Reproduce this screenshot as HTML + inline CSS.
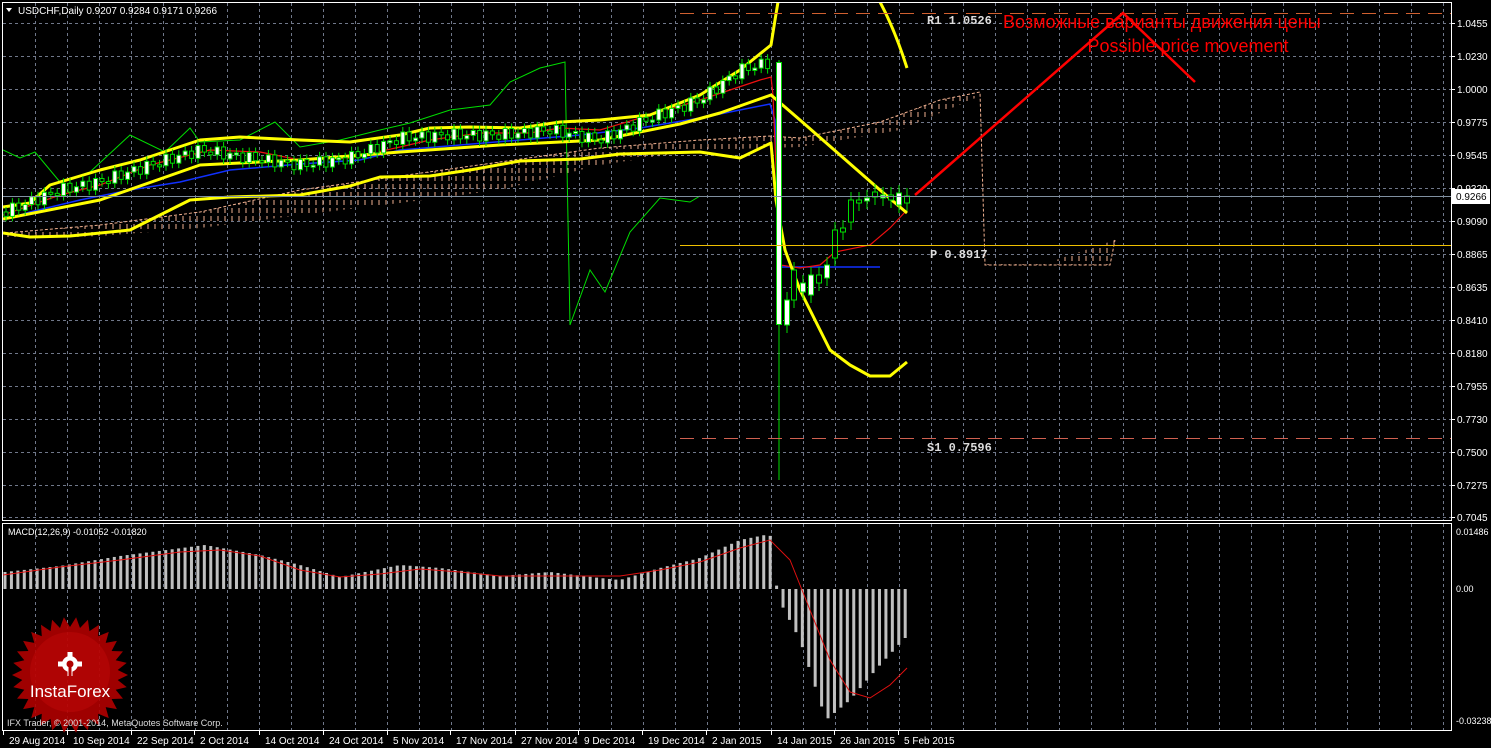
<!DOCTYPE html>
<html><head><meta charset="utf-8"><style>
html,body{margin:0;padding:0;background:#000;width:1491px;height:748px;overflow:hidden}
svg{display:block}
text{font-family:"Liberation Sans",sans-serif}
</style></head><body>
<svg id="s" width="1491" height="748" viewBox="0 0 1491 748" xmlns="http://www.w3.org/2000/svg">
<defs>
<pattern id="hatch" width="7" height="8" patternUnits="userSpaceOnUse">
<line x1="1" y1="0" x2="1" y2="5" stroke="#f0b090" stroke-width="1"/>
</pattern>
<clipPath id="mc"><rect x="3" y="3" width="1448" height="516"/></clipPath>
</defs>
<rect width="1491" height="748" fill="#000"/>
<g id="grid" stroke="#70788a" stroke-dasharray="3,3" stroke-width="1"></g>
<g stroke="#fff" stroke-width="1" fill="none">
<rect x="2.5" y="2.5" width="1449" height="518"/>
<rect x="2.5" y="523.5" width="1449" height="207"/>
</g>
<g clip-path="url(#mc)">
<path d="M5,233 L100,225 L200,212 L300,190 L400,176 L500,162 L600,148 L700,140 L770,136 L800,138 L880,122 L940,100 L980,92 L985,265 L1110,265 L1115,240 L1050,262 L985,262 L980,96 L900,130 L800,147 L700,150 L600,165 L500,190 L400,203 L300,215 L200,228 L100,236 L5,240 Z" fill="url(#hatch)"/>
<path d="M5,233 L100,225 L200,212 L300,190 L400,176 L500,162 L600,148 L700,140 L770,136 L800,138 L880,122 L940,100 L980,92 L985,265 L1110,265 L1115,240" fill="none" stroke="#f0b090" stroke-dasharray="3,2"/>
<polyline fill="none" stroke="#00dd00" points="3,150 20,158 35,152 60,182 90,172 130,135 165,152 190,128 200,142 240,140 275,122 300,147 340,140 380,130 410,123 450,110 490,105 510,82 540,68 565,62 570,325 590,270 605,292 630,232 660,198 690,202 700,196"/>
<polyline fill="none" stroke="#1030ff" stroke-width="1.5" points="3,220 30,212 80,200 130,190 180,182 230,170 300,164 360,160 400,150 460,145 520,140 580,135 640,128 700,118 770,104 775,120 780,267 880,267"/>
<polyline fill="none" stroke="#ee1010" stroke-width="1.2" points="3,215 60,195 100,185 150,165 210,150 260,152 300,160 350,158 400,147 430,140 480,133 530,133 560,128 600,130 660,112 700,100 760,80 771,77 773,95 780,265 800,268 820,265 835,252 870,245 890,228 907,210"/>
<g fill="none" stroke="#ffff00" stroke-width="3" stroke-linejoin="round">
<polyline points="3,207 30,203 50,185 100,170 140,160 200,140 240,137 300,140 350,142 400,135 430,128 470,127 520,128 560,122 600,120 650,115 700,95 740,70 771,45 775,20 778,2"/>
<polyline points="3,219 100,200 200,165 300,160 400,152 500,145 600,140 680,124 720,113 771,95 800,120 880,190 907,213"/>
<polyline points="3,233 30,237 70,236 130,230 190,200 230,197 300,195 350,186 380,177 430,176 470,170 520,161 580,159 620,154 700,152 740,158 771,143 776,200 785,250 800,290 820,330 830,350 850,365 870,376 890,376 907,362"/>
<path d="M880,2 Q895,30 907,68"/>
</g>
<g id="candles"></g>
<line x1="779" y1="60" x2="779" y2="480" stroke="#00dd00"/>
<rect x="776.5" y="62.5" width="5" height="262" fill="#fff" stroke="#00dd00"/>
</g>
<line x1="3" y1="196.5" x2="1451" y2="196.5" stroke="#8090a0"/>
<line x1="680" y1="245.5" x2="1451" y2="245.5" stroke="#f0c000"/>
<line x1="680" y1="438.5" x2="1451" y2="438.5" stroke="#d06050" stroke-dasharray="14,8"/>
<line x1="680" y1="13.5" x2="1451" y2="13.5" stroke="#d06030" stroke-dasharray="14,8"/>
<polyline fill="none" stroke="#ff0000" stroke-width="2.5" points="915,195 1123,13 1195,82"/>
<g font-size="12" fill="#ddd" font-weight="bold">
<text x="927" y="24" style="font-family:'Liberation Mono',monospace">R1 1.0526</text>
<text x="930" y="258" style="font-family:'Liberation Mono',monospace">P 0.8917</text>
<text x="927" y="451" style="font-family:'Liberation Mono',monospace">S1 0.7596</text>
</g>
<text x="1003" y="28" font-size="18" fill="#ff0000" style="font-family:'Liberation Sans','DejaVu Sans',sans-serif">Возможные варианты движения цены</text>
<text x="1188" y="52" font-size="18" fill="#ff0000" text-anchor="middle">Possible price movement</text>
<path d="M6,8 L12,8 L9,12 Z" fill="#fff"/>
<text x="18" y="14" font-size="10" fill="#fff">USDCHF,Daily  0.9207 0.9284 0.9171 0.9266</text>
<text x="8" y="535" font-size="9" fill="#fff">MACD(12,26,9) -0.01052 -0.01820</text>
<g id="macd"></g>
<polyline fill="none" stroke="#e01010" points="3,575 60,567 120,560 180,552 220,550 260,556 300,570 340,577 380,574 420,569 460,572 500,576 560,576 620,576 660,570 700,562 740,548 770,540 790,560 810,610 830,660 850,692 870,698 890,685 907,668"/>
<g id="ylab" font-size="10" fill="#fff"></g>
<rect x="1452" y="189" width="38" height="15" fill="#fff"/>
<text x="1456" y="200" font-size="10" fill="#000">0.9266</text>
<text x="1456" y="535" font-size="9" fill="#fff">0.01486</text>
<text x="1456" y="592" font-size="9" fill="#fff">0.00</text>
<text x="1456" y="724" font-size="9" fill="#fff">-0.03238</text>
<g id="xlab" font-size="10" fill="#fff"></g>
<g id="logo"></g>
<text x="70" y="697" font-size="17" fill="#fff" text-anchor="middle">InstaForex</text>
<g fill="#fff">
<circle cx="70" cy="664" r="8"/>
<rect x="67.5" y="652" width="5" height="24"/>
<rect x="58" y="661.5" width="24" height="5"/>
</g>
<circle cx="70" cy="664" r="3.5" fill="#b00000"/>
<rect x="68.5" y="664" width="3" height="12" fill="#b00000"/>
<text x="7" y="726" font-size="9" fill="#ddd">IFX Trader, © 2001-2014, MetaQuotes Software Corp.</text>
</svg>
<script>
(function(){
var NS="http://www.w3.org/2000/svg";
function el(p,t,a){var e=document.createElementNS(NS,t);for(var k in a)e.setAttribute(k,a[k]);p.appendChild(e);return e;}
var g=document.getElementById('grid');
for(var x=35;x<1451;x+=32){el(g,'line',{x1:x+.5,y1:3,x2:x+.5,y2:520});el(g,'line',{x1:x+.5,y1:524,x2:x+.5,y2:730});}
var yl=document.getElementById('ylab');
var labs=["1.0455","1.0230","1.0000","0.9775","0.9545","0.9320","0.9090","0.8865","0.8635","0.8410","0.8180","0.7955","0.7730","0.7500","0.7275","0.7045"];
for(var i=0;i<16;i++){var yy=23+i*33-(i==15?1:0);el(g,'line',{x1:3,y1:yy+.5,x2:1451,y2:yy+.5});
 el(yl,'line',{x1:1451,y1:yy+.5,x2:1455,y2:yy+.5,stroke:'#fff'});
 var t=el(yl,'text',{x:1457,y:yy+4});t.textContent=labs[i];}
var xl=document.getElementById('xlab');
var d=[[3,"29 Aug 2014"],[67,"10 Sep 2014"],[131,"22 Sep 2014"],[194,"2 Oct 2014"],[259,"14 Oct 2014"],[323,"24 Oct 2014"],[387,"5 Nov 2014"],[450,"17 Nov 2014"],[515,"27 Nov 2014"],[578,"9 Dec 2014"],[642,"19 Dec 2014"],[706,"2 Jan 2015"],[771,"14 Jan 2015"],[834,"26 Jan 2015"],[898,"5 Feb 2015"]];
d.forEach(function(a){el(xl,'line',{x1:a[0]+.5,y1:731,x2:a[0]+.5,y2:735,stroke:'#fff'});var t=el(xl,'text',{x:a[0]+6,y:744});t.textContent=a[1];});
var pp=[[5,212],[60,190],[100,182],[150,165],[200,150],[250,158],[300,165],[350,158],[400,138],[450,135],[500,135],[550,130],[600,140],[650,118],[700,100],[740,70],[771,62]];
function interp(p,x){for(var i=1;i<p.length;i++)if(x<=p[i][0]){var a=p[i-1],b=p[i];return a[1]+(b[1]-a[1])*(x-a[0])/(b[0]-a[0]);}return p[p.length-1][1];}
var cg=document.getElementById('candles');
var prev=212;
for(var x=6;x<772;x+=6.4){var c=interp(pp,x)+Math.sin(x*0.37)*6;var o=prev;var tp=Math.min(o,c),h=Math.max(2,Math.abs(o-c));
 el(cg,'line',{x1:x,y1:tp-5,x2:x,y2:tp+h+5,stroke:'#00dd00'});
 el(cg,'rect',{x:x-2,y:tp,width:4,height:h,fill:c<o?'#fff':'#000',stroke:'#00dd00'});prev=c;}
var late=[[787,300,325,1],[794,270,300,0],[803,283,292,1],[811,275,295,1],[819,283,275,0],[827,265,278,1],[835,258,230,0],[843,232,228,0],[851,222,200,0],[859,203,200,0],[867,200,198,1],[875,197,192,0],[883,195,197,1],[891,195,200,0],[899,205,193,1],[907,203,196,0]];
late.forEach(function(a){var tp=Math.min(a[1],a[2]),h=Math.max(3,Math.abs(a[1]-a[2]));
 el(cg,'line',{x1:a[0],y1:tp-8,x2:a[0],y2:tp+h+8,stroke:'#00dd00'});
 el(cg,'rect',{x:a[0]-2.5,y:tp,width:5,height:h,fill:a[3]?'#fff':'#000',stroke:'#00dd00'});});
var mg=document.getElementById('macd');
var mp=[[5,572],[60,566],[120,556],[205,545],[260,555],[300,565],[340,577],[400,565],[440,568],[500,576],[550,572],[600,578],[620,580],[660,568],[700,558],[740,540],[765,535],[771,536],[778,598],[800,640],[826,720],[850,700],[880,665],[908,635]];
for(var x=5;x<910;x+=6.43){var v=interp(mp,x);el(mg,'rect',{x:x-1.5,y:Math.min(589,v),width:3,height:Math.max(1,Math.abs(v-589)),fill:'#c0c0c0'});}
var lg=document.getElementById('logo');var pts=[];var N=30;
for(var i=0;i<N*2;i++){var r=i%2?48:58;var a=i*Math.PI/N;pts.push((70+r*Math.cos(a)).toFixed(1)+','+(675+r*Math.sin(a)).toFixed(1));}
el(lg,'polygon',{points:pts.join(' '),fill:'#b00000',opacity:'0.9'});
el(lg,'circle',{cx:70,cy:672,r:40,fill:'#c00808',opacity:'0.5'});
})();
</script>
</body></html>
